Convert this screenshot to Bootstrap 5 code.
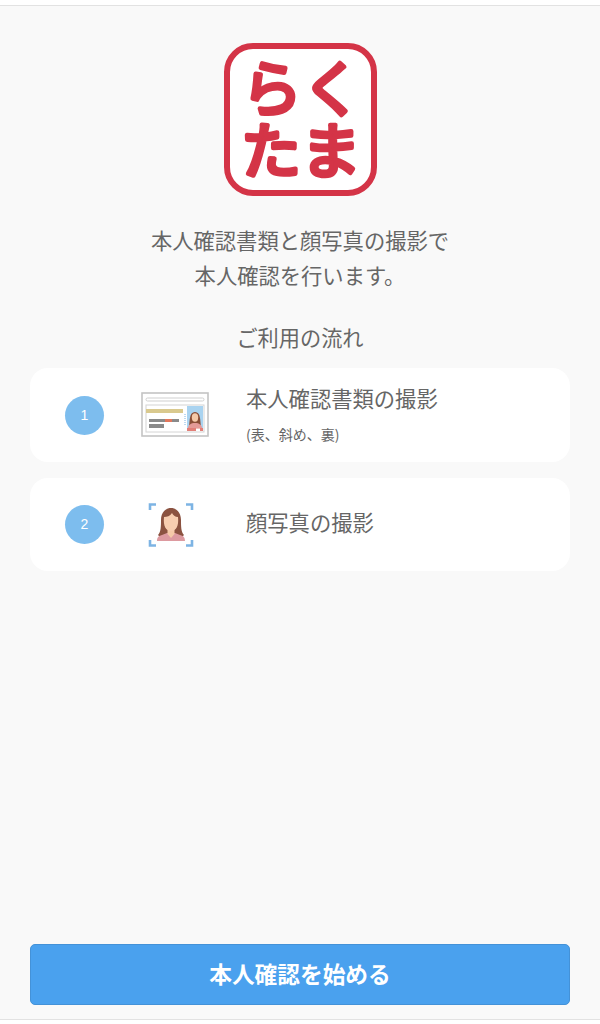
<!DOCTYPE html>
<html lang="ja">
<head>
    <meta charset="UTF-8">
    <meta name="viewport" content="width=device-width, initial-scale=1.0">
    <title>本人確認</title>
    <link rel="stylesheet" href="https://cdn.jsdelivr.net/npm/bootstrap@5.3.0/dist/css/bootstrap.min.css">
    <style>
        html, body { height: 1024px; overflow: hidden; background: #fff; }
        body { font-family: "Noto Sans CJK JP", "Liberation Sans", sans-serif; color: #666; padding-top: 5px; }
        .screen { height: 1015px; background: #f9f9f9; border-top: 1px solid #e2e2e2; border-bottom: 1px solid #e2e2e2; padding: 37px 30px 14px; }
        .logo-box { width: 153px; height: 153px; background: #fff; border: 6px solid #d43447; border-radius: 29px; }
        .logo-text { font-family: "Noto Sans CJK JP", sans-serif; font-size: 60px; font-weight: 400; fill: #d43447; stroke: #d43447; stroke-width: 4.500px; stroke-linejoin: round; stroke-linecap: round; }
        .lead-text { font-size: 21.3px; line-height: 35px; margin-top: 26px; }
        .flow-title { font-size: 21.2px; line-height: 30px; margin-top: 30px; margin-bottom: 16px; }
        .step-row { height: 94px; background: #fff; border-radius: 18px; margin-bottom: 16px; padding-left: 35px; }
        .step-row + .step-row { height: 93px; }
        .step-num { width: 39px; height: 39px; background: #7dbdee; color: #fff; border-radius: 50%; font-family: "Liberation Sans", sans-serif; font-size: 14px; flex-shrink: 0; }
        .step-pic { width: 68px; margin-left: 37px; flex-shrink: 0; }
        .step-text { margin-left: 37px; padding-bottom: 5px; font-size: 21.3px; line-height: 30px; }
        .step-note { font-size: 14px; line-height: 18px; margin-top: 12px; }
        .start-btn { height: 61px; background: #4aa1ee; border: 1px solid #4492d8; border-radius: 5px; color: #fff; font-size: 22.7px; font-weight: 700; }
        .start-btn:hover { background: #4aa1ee; color: #fff; }
    </style>
</head>
<body>
    <div class="screen d-flex flex-column">
        <div class="logo-box mx-auto">
            <svg width="141" height="141" viewBox="0 0 141 141" class="d-block">
                <text class="logo-text" x="12" y="62">ら</text>
                <text class="logo-text" x="72" y="62">く</text>
                <text class="logo-text" x="11" y="124">た</text>
                <text class="logo-text" x="71" y="124">ま</text>
            </svg>
        </div>
        <div class="lead-text text-center">本人確認書類と顔写真の撮影で<br>本人確認を行います。</div>
        <div class="flow-title text-center">ご利用の流れ</div>

        <div class="step-row d-flex align-items-center">
            <div class="step-num d-flex align-items-center justify-content-center">1</div>
            <div class="step-pic">
                <svg width="68" height="46" viewBox="0 0 68 46" class="d-block">
                    <rect x="1" y="1" width="66" height="43" fill="#fff" stroke="#c4c4c4" stroke-width="1.6"/>
                    <rect x="5" y="6" width="58" height="3" rx="1.5" fill="#fff" stroke="#cfcfcf"/>
                    <rect x="5" y="13" width="58" height="27" fill="#fff" stroke="#d4d4d4"/>
                    <rect x="5" y="17" width="37" height="4" fill="#d9c98e"/>
                    <rect x="8" y="27" width="30" height="3" fill="#8a8a8a"/>
                    <rect x="24" y="27" width="7" height="3" fill="#e2775c"/>
                    <rect x="8" y="32" width="15" height="4" fill="#8a8a8a"/>
                    <path d="M44 22v12" stroke="#7db4e4" stroke-width="1" stroke-dasharray="1 1"/>
                    <rect x="46" y="14" width="16" height="22" fill="#a9d3f0"/>
                    <path d="M48 34c1-5 0-14 6-14s5 9 6 14z" fill="#8a4d36"/>
                    <ellipse cx="54" cy="25.500" rx="3.200" ry="4.200" fill="#f5c9a8"/>
                    <path d="M47 36c0-3 3-5 7-5s7 2 7 5z" fill="#e59a97"/>
                    <rect x="46" y="36" width="16" height="3" fill="#e27f78"/>
                    <rect x="55" y="36.500" width="4" height="2.500" fill="#fff"/>
                </svg>
            </div>
            <div class="step-text">
                <div>本人確認書類の撮影</div>
                <div class="step-note">(表、斜め、裏)</div>
            </div>
        </div>

        <div class="step-row d-flex align-items-center">
            <div class="step-num d-flex align-items-center justify-content-center">2</div>
            <div class="step-pic">
                <svg width="68" height="46" viewBox="0 0 68 46" class="d-block">
                    <g fill="none" stroke="#7db4e4" stroke-width="2.600">
                        <path d="M9 8V2.500h6"/>
                        <path d="M45 2.500h6v5.500"/>
                        <path d="M9 38v5.500h6"/>
                        <path d="M45 43.500h6V38"/>
                    </g>
                    <path d="M17 33c3-3 3-9 3-15 0-8 5-12 10-12s10 4 10 12c0 6 0 12 3 15l-3 3H20z" fill="#8b5240"/>
                    <path d="M16 39c0-3 1-5 5-6l5-2h8l5 2c4 1 5 3 5 6z" fill="#dd9aa0"/>
                    <path d="M26.500 26h7v6l-3.500 4-3.500-4z" fill="#f5c9a8"/>
                    <path d="M23 15c3 0 6-1 8-4 1 2 3 4 6 4 1 9-2 14-7 14s-8-5-7-14z" fill="#f7cdb0"/>
                </svg>
            </div>
            <div class="step-text">顔写真の撮影</div>
        </div>

        <button type="button" class="btn start-btn w-100 mt-auto">本人確認を始める</button>
    </div>
    <script src="https://cdn.jsdelivr.net/npm/bootstrap@5.3.0/dist/js/bootstrap.bundle.min.js"></script>
</body>
</html>
